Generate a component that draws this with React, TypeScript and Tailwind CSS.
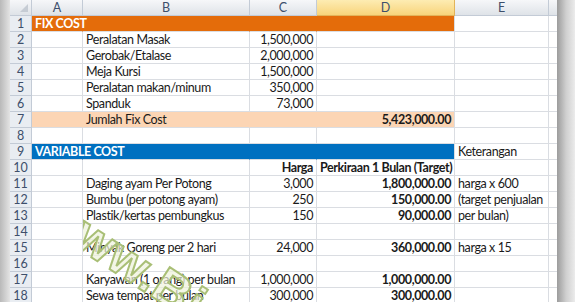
import React from "react";

type Band = "orange" | "peach" | "blue" | undefined;

type Row = {
  n: number;
  a?: string;
  b?: string;
  c?: string;
  d?: string;
  e?: string;
  band?: Band;
  boldC?: boolean;
};

const rows: Row[] = [
  { n: 1, a: "FIX COST", band: "orange" },
  { n: 2, b: "Peralatan Masak", c: "1,500,000" },
  { n: 3, b: "Gerobak/Etalase", c: "2,000,000" },
  { n: 4, b: "Meja Kursi", c: "1,500,000" },
  { n: 5, b: "Peralatan makan/minum", c: "350,000" },
  { n: 6, b: "Spanduk", c: "73,000" },
  { n: 7, b: "Jumlah Fix Cost", d: "5,423,000.00", band: "peach" },
  { n: 8 },
  { n: 9, a: "VARIABLE COST", e: "Keterangan", band: "blue" },
  { n: 10, c: "Harga", d: "Perkiraan 1 Bulan (Target)", boldC: true },
  { n: 11, b: "Daging ayam Per Potong", c: "3,000", d: "1,800,000.00", e: "harga x 600" },
  { n: 12, b: "Bumbu (per potong ayam)", c: "250", d: "150,000.00", e: "(target penjualan" },
  { n: 13, b: "Plastik/kertas pembungkus", c: "150", d: "90,000.00", e: "per bulan)" },
  { n: 14 },
  { n: 15, b: "Minyak Goreng per 2 hari", c: "24,000", d: "360,000.00", e: "harga x 15" },
  { n: 16 },
  { n: 17, b: "Karyawan (1 orang) per bulan", c: "1,000,000", d: "1,000,000.00" },
  { n: 18, b: "Sewa tempat per bulan", c: "300,000", d: "300,000.00" },
];

const bandBg: Record<string, string> = {
  orange: "bg-[#e46c0a] border-r-[#e46c0a]",
  peach: "bg-[#fcd5b4] border-r-[#fcd5b4]",
  blue: "bg-[#0070c0] border-r-[#0070c0]",
};

const cell = "border-b border-r border-[#dadde2] px-[3px] whitespace-nowrap overflow-visible leading-[16px]";

function SheetRow({ r }: { r: Row }) {
  const banded = r.band ? bandBg[r.band] : "bg-white";
  const bandEnd = r.band ? bandBg[r.band].split(" ")[0] : "bg-white";
  const bandText = r.band === "orange" || r.band === "blue" ? "text-white font-bold" : "";
  return (
    <>
      <div className="border-b border-r border-[#c3cbd6] bg-[#e9edf2] text-center tracking-normal text-[#3d4f6b] leading-[16px]">
        {r.n}
      </div>
      <div className={`${cell} ${banded} ${bandText} relative z-10`}>{r.a}</div>
      <div className={`${cell} ${banded}`}>{r.b}</div>
      <div className={`${cell} ${banded} text-right ${r.boldC ? "font-bold" : ""}`}>{r.c}</div>
      <div className={`${cell} ${bandEnd} text-right font-bold`}>{r.d}</div>
      <div className={`${cell} bg-white`}>{r.e}</div>
      <div className="border-b border-[#dadde2] bg-white" />
    </>
  );
}

// faint diagonal site watermark over the sheet
function Watermark() {
  return (
    <svg
      aria-hidden="true"
      className="pointer-events-none absolute left-0 top-0"
      width="575"
      height="302"
      viewBox="0 0 575 302"
    >
      <text
        transform="translate(37 222) rotate(33)"
        fontFamily="'Liberation Sans', sans-serif"
        fontSize="50"
        fontWeight="bold"
        letterSpacing="1"
        fill="#eef2dc"
        fillOpacity="0.7"
        stroke="#a9bf76"
        strokeWidth="2"
      >
        www.Bi
      </text>
    </svg>
  );
}

export default function App() {
  const colHead = "border-b border-r border-[#c3cbd6] bg-gradient-to-b from-[#f6f7f9] to-[#dfe3e8] text-center tracking-normal text-[#3d4f6b] leading-[16px]";
  return (
    <div className="relative flex h-[302px] w-[575px] overflow-hidden bg-[#e6e6e6] text-[12.5px] tracking-[-0.4px] text-[#1a1a1a] [font-family:Lato,'Liberation_Sans',sans-serif]">
      <div className="w-[10px] bg-gradient-to-r from-[#b9b9b9] to-[#e4e4e4]" />
      <div className="grid w-[547px] auto-rows-[16px] grid-cols-[22px_51px_167px_67px_138px_94px_8px] content-start bg-white">
        <div className={`${colHead} relative`}>
          <svg className="absolute bottom-[3px] right-[3px]" width="8" height="8" viewBox="0 0 8 8">
            <path d="M8 0 L8 8 L0 8 Z" fill="#c6ccd4" />
          </svg>
        </div>
        <div className={colHead}>A</div>
        <div className={colHead}>B</div>
        <div className={colHead}>C</div>
        <div className="border-b border-r border-[#e2b45a] bg-gradient-to-b from-[#fdecb2] to-[#f8d47a] text-center tracking-normal text-[#3d4f6b] leading-[16px]">
          D
        </div>
        <div className={colHead}>E</div>
        <div className="border-b border-[#c3cbd6] bg-gradient-to-b from-[#f6f7f9] to-[#dfe3e8]" />
        {rows.map((r) => (
          <SheetRow key={r.n} r={r} />
        ))}
      </div>
      <div className="flex-1 bg-gradient-to-r from-[#9c9c9c] via-[#cfcfcf] to-[#ececec]" />
      <Watermark />
    </div>
  );
}
